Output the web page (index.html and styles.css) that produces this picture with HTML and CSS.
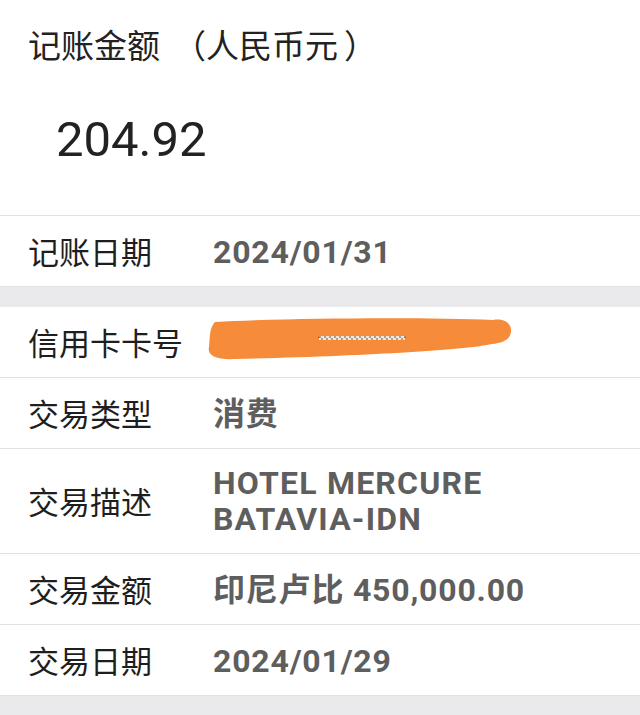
FILE: index.html
```html
<!DOCTYPE html>
<html lang="zh-CN">
<head>
<meta charset="utf-8">
<title>记账详情</title>
<link rel="stylesheet" href="styles.css">
</head>
<body>
<div class="page">
  <section class="card header">
    <div class="title">记账金额<span class="paren-open">（</span>人民币元<span class="paren-close">）</span></div>
    <div class="amount">204.92</div>
  </section>
  <section class="card">
    <div class="row">
      <div class="label">记账日期</div>
      <div class="value">2024/01/31</div>
    </div>
  </section>
  <div class="gap"></div>
  <section class="card">
    <div class="row">
      <div class="label">信用卡卡号</div>
      <div class="value masked">
        <svg class="blob" width="310" height="50" viewBox="0 0 310 50" aria-hidden="true">
          <path d="M10 9 C80 5 220 4 288 7 C300 5 307 11 306 19 C305 27 297 30 287 31 C260 37 160 43 30 46 C10 47 2 42 4 34 C5 26 4 15 10 9 Z" fill="#f68b3a"/>
          <rect x="114" y="23" width="86" height="4" fill="#f4e6da"/>
          <rect x="114" y="24" width="86" height="2" fill="none" stroke="#6a5548" stroke-width="1.2" stroke-dasharray="2 3"/>
        </svg>
      </div>
    </div>
    <div class="row">
      <div class="label">交易类型</div>
      <div class="value">消费</div>
    </div>
    <div class="row desc">
      <div class="label">交易描述</div>
      <div class="value">HOTEL MERCURE<br>BATAVIA-IDN</div>
    </div>
    <div class="row">
      <div class="label">交易金额</div>
      <div class="value">印尼卢比 450,000.00</div>
    </div>
    <div class="row">
      <div class="label">交易日期</div>
      <div class="value">2024/01/29</div>
    </div>
  </section>
</div>
</body>
</html>
```

FILE: styles.css
```css
html, body {
  margin: 0;
  padding: 0;
}
body {
  background: #eaeaec;
  font-family: "Noto Sans CJK SC", "Noto Sans", sans-serif;
  color: #1e1e1e;
}
.page {
  width: 640px;
  min-height: 715px;
}
.card {
  background: #ffffff;
}
.header {
  padding: 20px 0 45px 28px;
  border-bottom: 1px solid #e2e2e2;
}
.title {
  font-size: 33px;
  line-height: 48px;
  font-weight: 400;
  color: #222;
}
.paren-open {
  margin-left: 13px;
}
.paren-close {
  margin-left: 6px;
}
.amount {
  margin-top: 42px;
  padding-left: 28px;
  font-family: Roboto, "Noto Sans", sans-serif;
  font-size: 49px;
  line-height: 60px;
  font-weight: 400;
  color: #222;
}
.row {
  display: grid;
  grid-template-columns: 185px 1fr;
  align-items: center;
  padding: 16px 0 16px 28px;
  border-bottom: 1px solid #e2e2e2;
  line-height: 38px;
}
.row.desc {
  line-height: 36px;
}
.label {
  font-size: 31px;
  color: #1e1e1e;
}
.value {
  font-family: Roboto, "Noto Sans CJK SC", sans-serif;
  font-size: 32px;
  font-weight: 700;
  letter-spacing: 0.8px;
  color: #5e5e5e;
  padding-top: 2px;
  line-height: 36px;
}
.row.desc .value {
  padding-top: 0;
  letter-spacing: 1.2px;
}
.masked {
  position: relative;
  height: 36px;
}
.blob {
  position: absolute;
  left: -8px;
  top: -10px;
}
.gap {
  height: 20px;
}
```
